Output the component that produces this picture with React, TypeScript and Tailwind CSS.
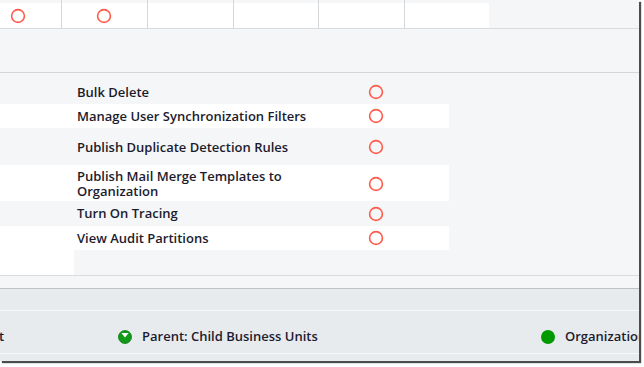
import React from "react";

const font = { fontFamily: '"Open Sans", "Noto Sans", sans-serif' };

function RedRing() {
  return (
    <svg width="16" height="16" viewBox="0 0 16 16" className="shrink-0">
      <circle cx="8" cy="8" r="6.4" fill="none" stroke="#ff5a4c" strokeWidth="1.6" />
    </svg>
  );
}

function UnitIcon() {
  return (
    <svg width="14" height="14" viewBox="0 0 14 14" className="shrink-0">
      <circle cx="7" cy="7" r="6.5" fill="#0f9a17" />
      <path d="M3.4 3 L10.6 3 L7 7.6 Z" fill="#ffffff" />
      <circle cx="7" cy="7" r="6.5" fill="none" stroke="#0a7a10" strokeWidth="0.8" />
    </svg>
  );
}

const rows = [
  { label: "Bulk Delete", h: "h-[31px] pt-[7px]", white: false },
  { label: "Manage User Synchronization Filters", h: "h-[24px]", white: true },
  { label: "Publish Duplicate Detection Rules", h: "h-[37px] pt-px", white: false },
  { label: "Publish Mail Merge Templates to Organization", h: "h-[36px] pt-px", white: true },
  { label: "Turn On Tracing", h: "h-[25px]", white: false },
  { label: "View Audit Partitions", h: "h-[24px]", white: true },
];

const cells = [
  { w: "w-[61px]", ring: true },
  { w: "w-[86px] border-l border-[#d4d6d9]", ring: true },
  { w: "w-[86px] border-l border-[#d4d6d9]", ring: false },
  { w: "w-[85px] border-l border-[#d4d6d9]", ring: false },
  { w: "w-[86px] border-l border-[#d4d6d9]", ring: false },
  { w: "w-[85px] border-l border-[#d4d6d9]", ring: false },
];

export default function App() {
  return (
    <div className="w-[644px] h-[367px] bg-white overflow-hidden" style={font}>
      <div className="w-[639px] h-[361px] bg-[#f5f6f8] shadow-[2px_2px_1px_rgba(0,0,0,0.7)] overflow-hidden flex flex-col">
        {/* top grid row */}
        <div className="h-[28px] flex shrink-0">
          {cells.map((c, i) => (
            <div key={i} className={`h-full flex flex-col shrink-0 ${c.w}`}>
              <div className="h-[3px] bg-[#f5f6f8]" />
              <div className={`flex-1 bg-white flex items-center ${i === 0 ? "pl-[10px]" : "pl-[34px]"}`}>
                {c.ring && <RedRing />}
              </div>
            </div>
          ))}
        </div>
        <div className="h-px bg-[#d9dbde] shrink-0" />
        <div className="h-[43px] shrink-0" />
        <div className="h-px bg-[#d4d6d9] shrink-0" />

        {/* privilege rows */}
        <div className="flex flex-col shrink-0">
          {rows.map((r) => (
            <div
              key={r.label}
              className={`w-[449px] flex items-center ${r.h} ${r.white ? "bg-white" : "bg-[#f5f6f8]"}`}
            >
              <div className="w-[77px] shrink-0" />
              <div className="w-[291px] shrink-0">
                <div className="w-[245px] text-[13px] leading-[15px] font-semibold text-[#1c1c2e]">
                  {r.label}
                </div>
              </div>
              <RedRing />
            </div>
          ))}
          <div className="h-[25px] flex">
            <div className="w-[74px] bg-white" />
          </div>
        </div>

        <div className="h-px bg-[#d9dbde] shrink-0" />
        <div className="h-[12px] shrink-0" />
        <div className="h-px bg-[#bfc3c8] shrink-0" />
        <div className="h-[21px] bg-[#e8ebee] shrink-0" />
        <div className="h-px bg-[#f7f8fa] shrink-0" />

        {/* status bar */}
        <div className="h-[42px] pt-[10px] bg-[#e8ebee] flex items-center shrink-0 text-[13px] font-semibold text-[#1c1c2e] whitespace-nowrap">
          <span className="-ml-[1px] w-[119px] shrink-0">t</span>
          <UnitIcon />
          <span className="ml-[10px] w-[399px] shrink-0">Parent: Child Business Units</span>
          <span className="w-[14px] h-[14px] rounded-full bg-[#009a00] shrink-0" />
          <span className="ml-[10px] shrink-0">Organization</span>
        </div>
        <div className="h-px bg-[#f7f8fa] shrink-0" />
        <div className="flex-1 bg-[#e8ebee]" />
      </div>
    </div>
  );
}
